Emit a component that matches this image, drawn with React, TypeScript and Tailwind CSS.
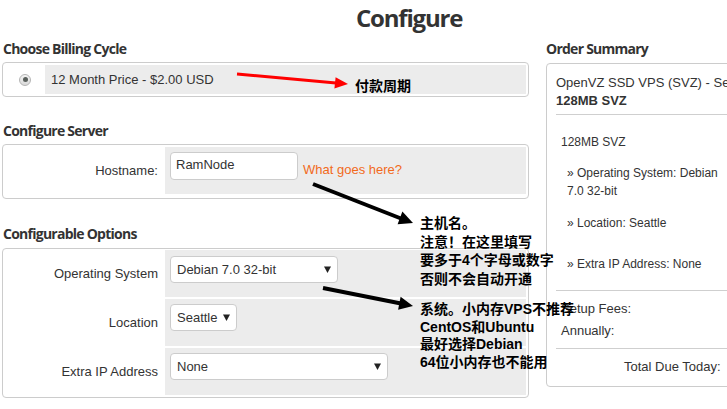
import React from "react";

const Caret = () => (
  <svg width="7" height="7" viewBox="0 0 7 7" className="shrink-0">
    <polygon points="0,0.5 7,0.5 3.5,7" fill="#222" />
  </svg>
);

const Heading = ({ children }: { children: React.ReactNode }) => (
  <div className="font-['Open_Sans',sans-serif] font-bold text-[14px] leading-[20px] tracking-[-0.75px] text-[#333] pl-[1px]">
    {children}
  </div>
);

function Select({ w, label }: { w: string; label: string }) {
  return (
    <div
      className={`${w} h-[27px] bg-white border border-[#ccc] rounded-[4px] flex items-center justify-between pl-[6px] pr-[6px]`}
    >
      <span className="leading-none -mt-[1px]">{label}</span>
      <Caret />
    </div>
  );
}

function OptRow({
  label,
  children,
  pt,
}: {
  label: string;
  children: React.ReactNode;
  pt: string;
}) {
  return (
    <div className="flex h-[47px]">
      <div className="w-[160px] flex items-center justify-end pr-[7px]">{label}</div>
      <div className={`flex-1 bg-[#ececec] pl-[5px] ${pt}`}>{children}</div>
    </div>
  );
}

export default function App() {
  return (
    <div className="relative w-[727px] h-[409px] overflow-hidden bg-white text-[#333] font-['Liberation_Sans',Arial,sans-serif] text-[13px]">
      <div className="h-[36px] pl-[356px] flex items-center">
        <div className="font-['Open_Sans',sans-serif] font-bold text-[24px] tracking-[-1.2px] leading-none text-[#333]">
          Configure
        </div>
      </div>

      <div className="flex">
        {/* Left column */}
        <div className="w-[527px] ml-[2px] shrink-0">
          <div className="mt-[3px] mb-[3px]">
            <Heading>Choose Billing Cycle</Heading>
          </div>
          <div className="h-[35px] border border-[#ccc] rounded-[4px] px-[2px] pt-[2px] pb-[2px] flex">
            <div className="w-[40px] flex items-center justify-center">
              <div className="w-[12px] h-[12px] rounded-full border border-[#b5b5b5] bg-gradient-to-b from-[#f4f4f4] to-[#d9d9d9] flex items-center justify-center">
                <div className="w-[5px] h-[5px] rounded-full bg-[#5a605c]" />
              </div>
            </div>
            <div className="flex-1 bg-[#ececec] flex items-center pl-[6px]">
              12 Month Price - $2.00 USD
            </div>
          </div>

          <div className="mt-[24px] mb-[3px]">
            <Heading>Configure Server</Heading>
          </div>
          <div className="border border-[#ccc] rounded-[4px] px-[2px] pt-[2px] pb-[4px]">
            <div className="flex h-[47px]">
              <div className="w-[160px] flex items-center justify-end pr-[7px]">Hostname:</div>
              <div className="flex-1 bg-[#ececec] pl-[5px] pt-[5px] flex items-start">
                <div className="w-[128px] h-[28px] bg-white border border-[#ccc] rounded-[4px] flex items-center pl-[5px]">
                  <span className="-mt-[2px]">RamNode</span>
                </div>
                <span className="ml-[5px] mt-[10px] leading-[15px] text-[#f26a1b]">What goes here?</span>
              </div>
            </div>
          </div>

          <div className="mt-[25px] mb-[4px]">
            <Heading>Configurable Options</Heading>
          </div>
          <div className="border border-[#ccc] rounded-[4px] px-[2px] pt-[1px] pb-[2px] flex flex-col gap-[2px]">
            <OptRow label="Operating System" pt="pt-[6px]">
              <Select w="w-[168px]" label="Debian 7.0 32-bit" />
            </OptRow>
            <OptRow label="Location" pt="pt-[5px]">
              <Select w="w-[67px]" label="Seattle" />
            </OptRow>
            <OptRow label="Extra IP Address" pt="pt-[5px]">
              <Select w="w-[218px]" label="None" />
            </OptRow>
          </div>
        </div>

        {/* Right column */}
        <div className="ml-[16px] w-[320px] shrink-0">
          <div className="mt-[3px] mb-[4px]">
            <Heading>Order Summary</Heading>
          </div>
          <div className="ml-[1px] border border-[#ccc] rounded-[4px] pl-[9px] pt-[10px] pb-[10px] leading-[18px]">
            <div className="whitespace-nowrap">OpenVZ SSD VPS (SVZ) - Seattle</div>
            <div className="font-bold">128MB SVZ</div>
            <div className="mt-[4px] h-px bg-[#cfcfcf]" />
            <div className="text-[12px]">
              <div className="mt-[18px] pl-[5px]">128MB SVZ</div>
              <div className="pl-[11px] w-[173px]">
                <div className="mt-[13px]">» Operating System: Debian 7.0 32-bit</div>
                <div className="mt-[14px]">» Location: Seattle</div>
                <div className="mt-[23px]">» Extra IP Address: None</div>
              </div>
            </div>
            <div className="mt-[17px] h-px bg-[#cfcfcf]" />
            <div className="mt-[9px] pl-[5px]">Setup Fees:</div>
            <div className="mt-[4px] pl-[5px]">Annually:</div>
            <div className="mt-[8px] h-px bg-[#cfcfcf]" />
            <div className="mt-[9px] pl-[68px]">Total Due Today:</div>
          </div>
        </div>
      </div>

      {/* Arrows */}
      <svg className="absolute left-0 top-0 pointer-events-none" width="727" height="409">
        <line x1="237" y1="74" x2="336" y2="83" stroke="#ff0000" strokeWidth="3" />
        <polygon points="348,84 334.4,88.6 335.6,77.2" fill="#ff0000" />
        <line x1="313" y1="184" x2="401" y2="218.5" stroke="#000" strokeWidth="4" />
        <polygon points="413,223 397.6,224.2 402.4,211.6" fill="#000" />
        <line x1="323" y1="288" x2="401" y2="303.5" stroke="#000" strokeWidth="4" />
        <polygon points="413,306 398.1,309.8 400.6,296.8" fill="#000" />
      </svg>

      {/* Annotations */}
      <div className="absolute left-[355px] top-[77px] font-['Liberation_Sans','Noto_Sans_CJK_SC',sans-serif] font-bold text-[14px] leading-[18px] text-black">
        付款周期
      </div>
      <div className="absolute left-[420px] top-[214px] font-['Liberation_Sans','Noto_Sans_CJK_SC',sans-serif] font-bold text-[14px] leading-[18.5px] text-black whitespace-nowrap">
        <div>主机名。</div>
        <div>注意！在这里填写</div>
        <div>要多于4个字母或数字</div>
        <div>否则不会自动开通</div>
      </div>
      <div className="absolute left-[420px] top-[301px] font-['Liberation_Sans','Noto_Sans_CJK_SC',sans-serif] font-bold text-[14px] leading-[17.7px] text-black whitespace-nowrap">
        <div>系统。小内存VPS不推荐</div>
        <div>CentOS和Ubuntu</div>
        <div>最好选择Debian</div>
        <div>64位小内存也不能用</div>
      </div>
    </div>
  );
}
